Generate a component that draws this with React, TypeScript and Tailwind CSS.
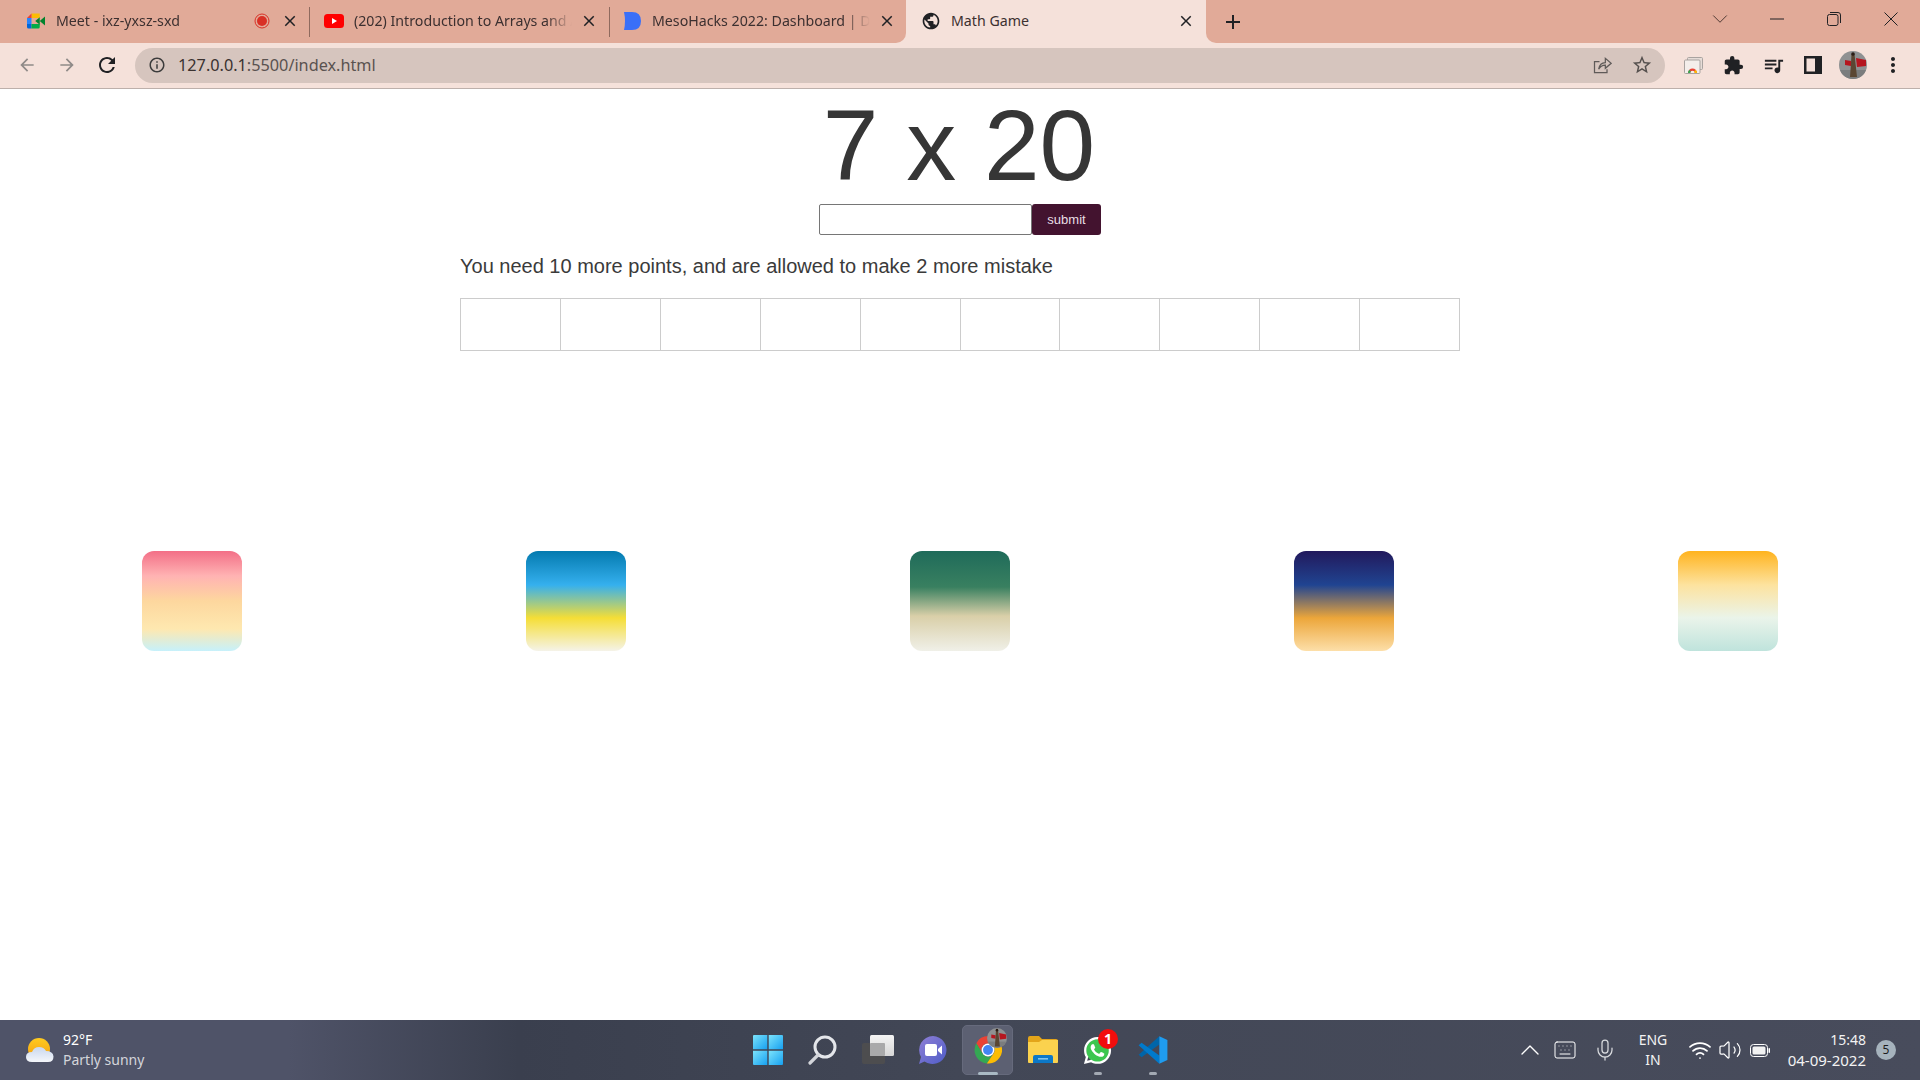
import React from "react";
import {
  MdArrowBack, MdArrowForward, MdRefresh, MdInfoOutline, MdStarBorder, MdExtension,
  MdQueueMusic, MdMoreVert, MdClose, MdAdd, MdPublic,
} from "react-icons/md";
import { FaWhatsapp } from "react-icons/fa";
import { ChevronUp, ChevronDown, Keyboard, Mic, Wifi, Volume2 } from "lucide-react";

function MeetIcon() {
  return (
    <svg width="18" height="16" viewBox="0 0 24 20">
      <path d="M6 0 H17 V6 H6 Z" fill="#fbbc04" />
      <path d="M6 0 V6 H0 Z" fill="#ea4335" />
      <path d="M0 6 H6 V14 H0 Z" fill="#2684fc" />
      <path d="M0 14 H6 V20 H2 Q0 20 0 18 Z" fill="#0066da" />
      <path d="M6 14 H17 V18 Q17 20 15 20 H6 Z" fill="#00ac47" />
      <path d="M17 10 L24 4 V16 L17 10 Z" fill="#00832d" />
      <path d="M11 10 L17 5 V15 Z" fill="#00832d" />
    </svg>
  );
}

function YouTubeIcon() {
  return (
    <svg width="20" height="14" viewBox="0 0 20 14">
      <rect width="20" height="14" rx="3.5" fill="#ff0000" />
      <path d="M8 4 L13 7 L8 10 Z" fill="#fff" />
    </svg>
  );
}

function DevfolioIcon() {
  return (
    <svg width="20" height="20" viewBox="0 0 20 20">
      <path d="M2 1 H10 Q19 1 19 10 Q19 19 10 19 H2 Q4 10 2 1 Z" fill="#3a6ff8" />
    </svg>
  );
}

function RecordIcon() {
  return (
    <svg width="16" height="16" viewBox="0 0 16 16">
      <circle cx="8" cy="8" r="7" fill="none" stroke="#d93025" strokeWidth="1" />
      <circle cx="8" cy="8" r="5" fill="#d93025" />
    </svg>
  );
}

function ShareIcon() {
  return (
    <svg width="20" height="20" viewBox="0 0 24 24" fill="none" stroke="#5f5a58" strokeWidth="1.5">
      <path d="M9 8 H3 V21 H18 V17" />
      <path d="M8 17 C9 11 13 9 16 9 V4 L23 10 L16 16 V12 C13 12 10 13 8 17 Z" />
    </svg>
  );
}

function CastIcon() {
  return (
    <svg width="19" height="17" viewBox="0 0 19 17">
      <rect x="3.5" y="0.5" width="15" height="12" rx="1" fill="#e6dcd7" stroke="#a9a3a0" />
      <rect x="0.5" y="3" width="15.5" height="13.5" rx="1" fill="#f4eeeb" stroke="#a9a3a0" />
      <path d="M4 16 A4.5 4.5 0 0 1 13 16 H10.8 A2.3 2.3 0 0 0 6.2 16 Z" fill="#ea4335" />
      <path d="M10.8 16 H13 A4.5 4.5 0 0 0 11.7 12.8 L10.1 14.4 Z" fill="#fbbc04" />
      <path d="M4 16 H6.2 A2.3 2.3 0 0 1 6.9 14.4 L5.3 12.8 A4.5 4.5 0 0 0 4 16 Z" fill="#34a853" />
    </svg>
  );
}

function PanelIcon() {
  return (
    <svg width="18" height="18" viewBox="0 0 18 18">
      <rect width="18" height="18" fill="#202124" />
      <rect x="2.5" y="2.5" width="8.5" height="13" fill="#f5e1da" />
    </svg>
  );
}

function AvatarPic({ size }: { size: number }) {
  return (
    <svg width={size} height={size} viewBox="0 0 28 28">
      <clipPath id={`av${size}`}>
        <circle cx="14" cy="14" r="14" />
      </clipPath>
      <g clipPath={`url(#av${size})`}>
        <rect width="28" height="28" fill="#8f9192" />
        <rect y="19" width="28" height="9" fill="#7b7d7e" />
        <path d="M6 9 L12 10 V15 L6 14 Z" fill="#b5161f" />
        <path d="M17 7 L27 9 V15 L18 16 Z" fill="#b5161f" />
        <path d="M12.5 3 H15.5 L16.5 12 L18 26 H11 L12 12 Z" fill="#5a4632" />
        <circle cx="14" cy="3" r="1.8" fill="#2a1d16" />
      </g>
    </svg>
  );
}

function WindowsIcon() {
  return (
    <svg width="30" height="30" viewBox="0 0 30 30">
      <defs>
        <linearGradient id="winA" x1="0" y1="0" x2="1" y2="1">
          <stop offset="0" stopColor="#7ce3fb" />
          <stop offset="1" stopColor="#16a0f0" />
        </linearGradient>
      </defs>
      <path d="M1 0 H14.3 V14.3 H0 V1 Q0 0 1 0 Z" fill="url(#winA)" />
      <path d="M15.7 0 H29 Q30 0 30 1 V14.3 H15.7 Z" fill="url(#winA)" />
      <path d="M0 15.7 H14.3 V30 H1 Q0 30 0 29 Z" fill="url(#winA)" />
      <path d="M15.7 15.7 H30 V29 Q30 30 29 30 H15.7 Z" fill="url(#winA)" />
    </svg>
  );
}

function SearchIcon() {
  return (
    <svg width="30" height="30" viewBox="0 0 30 30" fill="none">
      <circle cx="17" cy="12" r="10" stroke="#e4e6ea" strokeWidth="3" />
      <path d="M10 20 L2 28" stroke="#d3d5da" strokeWidth="3.2" strokeLinecap="round" />
    </svg>
  );
}

function TaskViewIcon() {
  return (
    <svg width="32" height="30" viewBox="0 0 32 30">
      <defs>
        <linearGradient id="tvA" x1="0" y1="0" x2="0" y2="1">
          <stop offset="0" stopColor="#f4f4f4" />
          <stop offset="1" stopColor="#d6d6d6" />
        </linearGradient>
      </defs>
      <rect x="0" y="8" width="23" height="21" rx="2" fill="#4d4d4f" />
      <rect x="8" y="0" width="24" height="21" rx="1.5" fill="url(#tvA)" />
      <rect x="8" y="8" width="15" height="13" rx="1" fill="#a9a9aa" />
    </svg>
  );
}

function ChatIcon() {
  return (
    <svg width="30" height="30" viewBox="0 0 30 30">
      <defs>
        <linearGradient id="chatA" x1="0" y1="0" x2="1" y2="1">
          <stop offset="0" stopColor="#8f7fd6" />
          <stop offset="1" stopColor="#4f5dc8" />
        </linearGradient>
      </defs>
      <path d="M15 1 A14 14 0 1 1 6.5 26.5 L1 29 L3 22 A14 14 0 0 1 15 1 Z" fill="url(#chatA)" />
      <rect x="7" y="9" width="12" height="12" rx="2" fill="#fff" />
      <path d="M20 14 L24 10.5 V19.5 L20 16 Z" fill="#fff" />
    </svg>
  );
}

function ChromeIcon() {
  return (
    <svg width="28" height="28" viewBox="0 0 48 48">
      <path d="M24 13 H45 A23 23 0 0 0 4 12.5 L14.5 30 A11 11 0 0 1 24 13 Z" fill="#ea4335" />
      <path d="M4 12.5 A23 23 0 0 0 22 47 L33.5 30 A11 11 0 0 1 14.5 30 Z" fill="#34a853" />
      <path d="M45 13 A23 23 0 0 1 22 47 L33.5 30 A11 11 0 0 0 24 13 Z" fill="#fbbc04" />
      <circle cx="24" cy="24" r="11" fill="#fff" />
      <circle cx="24" cy="24" r="8.5" fill="#4285f4" />
    </svg>
  );
}

function FolderIcon() {
  return (
    <svg width="30" height="28" viewBox="0 0 30 28">
      <path d="M0 2 Q0 0 2 0 H11 L14 3 H28 Q30 3 30 5 V8 H0 Z" fill="#e3a51a" />
      <path d="M0 6 H11 L14 4 H30 V26 Q30 27 29 27 H1 Q0 27 0 26 Z" fill="#fbd24e" />
      <path d="M5 27 V21 Q5 19 7 19 H23 Q25 19 25 21 V27 Z" fill="#0c78c8" />
      <rect x="10" y="22" width="10" height="1.6" fill="#7ec3ef" />
    </svg>
  );
}

function VSCodeIcon() {
  return (
    <svg width="30" height="30" viewBox="0 0 100 100">
      <polygon points="71,4 71,32 12,74 2,66" fill="#0065a9" />
      <polygon points="12,26 2,34 71,96 71,68" fill="#007acc" />
      <polygon points="71,4 98,17 98,83 71,96" fill="#1f9cf0" />
    </svg>
  );
}

function WeatherIcon() {
  return (
    <svg width="28" height="25" viewBox="0 0 28 25">
      <defs>
        <linearGradient id="sunA" x1="0" y1="0" x2="0" y2="1">
          <stop offset="0" stopColor="#ffcb1f" />
          <stop offset="1" stopColor="#f39c12" />
        </linearGradient>
        <linearGradient id="cloudA" x1="0" y1="0" x2="0" y2="1">
          <stop offset="0" stopColor="#c9d7ee" />
          <stop offset="1" stopColor="#f4f6fa" />
        </linearGradient>
      </defs>
      <circle cx="13" cy="11" r="11" fill="url(#sunA)" />
      <path d="M6 24 Q0 24 0 19 Q0 14 6 14 Q8 9 13 9 Q18 9 20 13 Q27 13 27.5 18.5 Q27.5 24 22 24 Z" fill="url(#cloudA)" />
    </svg>
  );
}

function BatteryIcon() {
  return (
    <svg width="20" height="13" viewBox="0 0 20 13">
      <rect x="0.5" y="0.5" width="17" height="12" rx="3" fill="none" stroke="#ffffff" />
      <rect x="2.5" y="2.5" width="13" height="8" rx="1.5" fill="#f2f2f2" />
      <rect x="18.5" y="4" width="1.5" height="5" rx="0.75" fill="#ffffff" />
    </svg>
  );
}

function Tab({
  icon, title, active, className, trailing,
}: {
  icon: React.ReactNode; title: string; active?: boolean; className: string; trailing?: React.ReactNode;
}) {
  return (
    <div className={`flex items-center h-full pb-[2px] ${className}`}>
      <div className="w-[20px] flex items-center justify-center shrink-0">{icon}</div>
      <div
        className={`flex-1 ml-[10px] mr-[8px] min-w-0 whitespace-nowrap overflow-hidden text-[14.2px] text-[#3c3030] ${
          active ? "" : "[mask-image:linear-gradient(90deg,#000_88%,transparent_100%)]"
        }`}
      >
        {title}
      </div>
      {trailing}
      <MdClose className="text-[#202124] shrink-0" size={18} />
    </div>
  );
}

function ToolbarBtn({ children }: { children: React.ReactNode }) {
  return <div className="w-[40px] h-full flex items-center justify-center shrink-0">{children}</div>;
}

function TaskItem({ children, indicator, active }: { children: React.ReactNode; indicator?: string; active?: boolean }) {
  return (
    <div className="w-[55px] h-[50px] flex items-center justify-center relative">
      {active && <div className="absolute inset-x-[2px] inset-y-0 rounded-[5px] bg-[#5c6072] border border-[#666a7c]" />}
      <div className="relative flex items-center justify-center">{children}</div>
      {indicator && <div className={`absolute bottom-[0px] h-[3px] rounded-full ${indicator}`} />}
    </div>
  );
}

export default function App() {
  const gradients = [
    "bg-[linear-gradient(180deg,#f36f87_0%,#ffb3b3_25%,#fdd79e_50%,#fee8b0_78%,#c6f1fb_100%)]",
    "bg-[linear-gradient(180deg,#047aaf_0%,#35b0ee_34%,#f5de36_67%,#f5f3e8_100%)]",
    "bg-[linear-gradient(180deg,#1f6b5a_0%,#398060_36%,#d9cfa8_65%,#f0f0e8_100%)]",
    "bg-[linear-gradient(180deg,#22195c_0%,#204491_34%,#eca63a_67%,#fddfa9_100%)]",
    "bg-[linear-gradient(180deg,#ffb31e_0%,#fde39f_34%,#eaf4ea_67%,#bfe3dc_100%)]",
  ];
  return (
    <div className="w-[1920px] h-[1080px] flex flex-col overflow-hidden bg-white font-['Noto_Sans',sans-serif]">
      {/* Tab strip */}
      <div className="h-[43px] flex shrink-0 bg-[#f5e1da]">
        <div className="flex h-full pl-[10px] bg-[#e1aa98] rounded-br-[10px] w-[906px]">
          <Tab
            className="w-[299px] pl-[16px] pr-[10px]"
            icon={<MeetIcon />}
            title="Meet - ixz-yxsz-sxd"
            trailing={<div className="mr-[11px]"><RecordIcon /></div>}
          />
          <div className="w-px h-[30px] self-center bg-[#8f6a5e] shrink-0" />
          <Tab
            className="w-[299px] pl-[14px] pr-[11px]"
            icon={<YouTubeIcon />}
            title="(202) Introduction to Arrays and Arrays"
          />
          <div className="w-px h-[30px] self-center bg-[#8f6a5e] shrink-0" />
          <Tab
            className="w-[296px] pl-[12px] pr-[10px]"
            icon={<DevfolioIcon />}
            title="MesoHacks 2022: Dashboard | Devfolio"
          />
        </div>
        <div className="w-[300px] h-full rounded-t-[10px] bg-[#f5e1da]">
          <Tab
            active
            className="w-full pl-[15px] pr-[11px]"
            icon={<MdPublic className="text-[#202124]" size={20} />}
            title="Math Game"
          />
        </div>
        <div className="flex-1 h-full bg-[#e1aa98] rounded-bl-[10px] flex items-center">
          <MdAdd className="ml-[15px] text-[#202124]" size={24} />
          <div className="ml-auto flex items-center pb-[6px] pr-[1px]">
            <div className="w-[57px] flex justify-center">
              <ChevronDown size={26} strokeWidth={0.8} className="text-[#3a2a25]" />
            </div>
            <div className="w-[57px] flex justify-center">
              <svg width="14" height="14" viewBox="0 0 14 14"><path d="M0 7 H14" stroke="#202124" /></svg>
            </div>
            <div className="w-[57px] flex justify-center">
              <svg width="14" height="14" viewBox="0 0 14 14" fill="none" stroke="#202124">
                <rect x="0.5" y="2.5" width="10.5" height="11" rx="2" />
                <path d="M3 .5 H11 Q13.5 .5 13.5 3 V11" />
              </svg>
            </div>
            <div className="w-[57px] flex justify-center">
              <svg width="14" height="14" viewBox="0 0 14 14"><path d="M0.5 0.5 L13.5 13.5 M13.5 0.5 L0.5 13.5" stroke="#202124" /></svg>
            </div>
          </div>
        </div>
      </div>

      {/* Toolbar */}
      <div className="h-[46px] flex items-center shrink-0 pl-[7px] pb-[1px] bg-[#f5e1da] border-b border-[#bdb0ab]">
        <ToolbarBtn><MdArrowBack size={20} className="text-[#8f8a88]" /></ToolbarBtn>
        <ToolbarBtn><MdArrowForward size={20} className="text-[#8f8a88]" /></ToolbarBtn>
        <ToolbarBtn><MdRefresh size={24} className="text-[#202124]" /></ToolbarBtn>
        <div className="ml-[8px] w-[1530px] h-[35px] rounded-full bg-[#d6c5be] flex items-center pl-[13px] pr-[3px] shrink-0">
          <MdInfoOutline size={18} className="text-[#3c3c3c]" />
          <div className="ml-[12px] pt-[1px] text-[16.25px] text-[#3a3230]">
            127.0.0.1<span className="text-[#5a5250]">:5500/index.html</span>
          </div>
          <div className="ml-auto flex h-full">
            <ToolbarBtn><ShareIcon /></ToolbarBtn>
            <ToolbarBtn><MdStarBorder size={22} className="text-[#55504e]" /></ToolbarBtn>
          </div>
        </div>
        <div className="ml-[8px] flex h-full">
          <ToolbarBtn><CastIcon /></ToolbarBtn>
          <ToolbarBtn><MdExtension size={21} className="text-[#202124]" /></ToolbarBtn>
          <ToolbarBtn><MdQueueMusic size={23} className="text-[#202124]" /></ToolbarBtn>
          <ToolbarBtn><PanelIcon /></ToolbarBtn>
          <ToolbarBtn><AvatarPic size={28} /></ToolbarBtn>
          <ToolbarBtn><MdMoreVert size={24} className="text-[#202124]" /></ToolbarBtn>
        </div>
      </div>

      {/* Page */}
      <main className="flex-1 flex flex-col items-center font-['Liberation_Sans',sans-serif] text-[#363636]">
        <div className="h-[115px] leading-[113px] text-[100px] text-center -ml-[2px]">7 x 20</div>
        <div className="flex h-[31px]">
          <input className="w-[213px] h-full bg-white border border-[#767676] rounded-[2px] outline-none" />
          <button className="w-[69px] h-full bg-[#43132f] rounded-[3px] text-[13px] text-[#e8dfe4]">submit</button>
        </div>
        <p className="w-[1000px] mt-[15px] h-[33px] leading-[33px] text-[20px] text-[#3a3a3a]">
          You need 10 more points, and are allowed to make 2 more mistake
        </p>
        <div className="w-[1000px] h-[53px] mt-[15px] flex border border-[#cccccc]">
          {Array.from({ length: 10 }).map((_, i) => (
            <div key={i} className="flex-1 border-r border-[#cccccc] last:border-r-0" />
          ))}
        </div>
        <div className="w-full mt-[200px] flex justify-around">
          {gradients.map((g) => (
            <div key={g} className={`w-[100px] h-[100px] rounded-[12px] ${g}`} />
          ))}
        </div>
      </main>

      {/* Taskbar */}
      <div className="h-[60px] shrink-0 flex items-center bg-[linear-gradient(90deg,#4f5368_0%,#4f5368_15%,#3a3f4e_27%,#424756_50%,#484c5c_100%)] text-white">
        <div className="w-[740px] flex items-center pl-[26px]">
          <WeatherIcon />
          <div className="ml-[9px] text-[14px] leading-[20px]">
            <div>92°F</div>
            <div className="text-[#d4d5db]">Partly sunny</div>
          </div>
        </div>
        <div className="flex items-center h-[50px]">
          <TaskItem><WindowsIcon /></TaskItem>
          <TaskItem><SearchIcon /></TaskItem>
          <TaskItem><TaskViewIcon /></TaskItem>
          <TaskItem><ChatIcon /></TaskItem>
          <TaskItem active indicator="w-[20px] bg-[#a9b9c4]">
            <ChromeIcon />
            <div className="absolute -top-[8px] -right-[5px] rounded-full"><AvatarPic size={20} /></div>
          </TaskItem>
          <TaskItem>
            <FolderIcon />
          </TaskItem>
          <TaskItem indicator="w-[8px] bg-[#a3a9b3]">
            <div className="w-[23px] h-[23px] rounded-full bg-[#3cc64f] flex items-center justify-center">
              <FaWhatsapp size={31} className="text-white shrink-0" />
            </div>
            <div className="absolute -top-[10px] -right-[9px] w-[20px] h-[20px] rounded-full bg-[#f20d0d] flex items-center justify-center text-[14px] font-bold text-white">1</div>
          </TaskItem>
          <TaskItem indicator="w-[8px] bg-[#a3a9b3]"><VSCodeIcon /></TaskItem>
        </div>
        <div className="ml-auto flex items-center pr-[24px]">
          <div className="w-[34px] flex justify-center"><ChevronUp size={32} strokeWidth={1} /></div>
          <div className="w-[36px] flex justify-center"><Keyboard size={24} strokeWidth={1} /></div>
          <div className="w-[44px] flex justify-center"><Mic size={24} strokeWidth={1.25} className="text-[#d9dbdf]" /></div>
          <div className="w-[52px] text-center text-[14px] leading-[20px] text-[#f3f3f3]">ENG<br />IN</div>
          <div className="w-[6px]" />
          <div className="w-[30px] flex justify-center"><Wifi size={24} strokeWidth={1.75} /></div>
          <div className="w-[30px] flex justify-center"><Volume2 size={24} strokeWidth={1.25} /></div>
          <div className="w-[30px] flex justify-center"><BatteryIcon /></div>
          <div className="w-[91px] text-right text-[15px] leading-[20px] text-[#f3f3f3]">
            <div className="text-[14px]">15:48</div>
            <div>04-09-2022</div>
          </div>
          <div className="ml-[10px] w-[20px] h-[20px] rounded-full bg-[#a6b3bd] flex items-center justify-center text-[12px] text-[#1c1c1c]">5</div>
        </div>
      </div>
    </div>
  );
}
